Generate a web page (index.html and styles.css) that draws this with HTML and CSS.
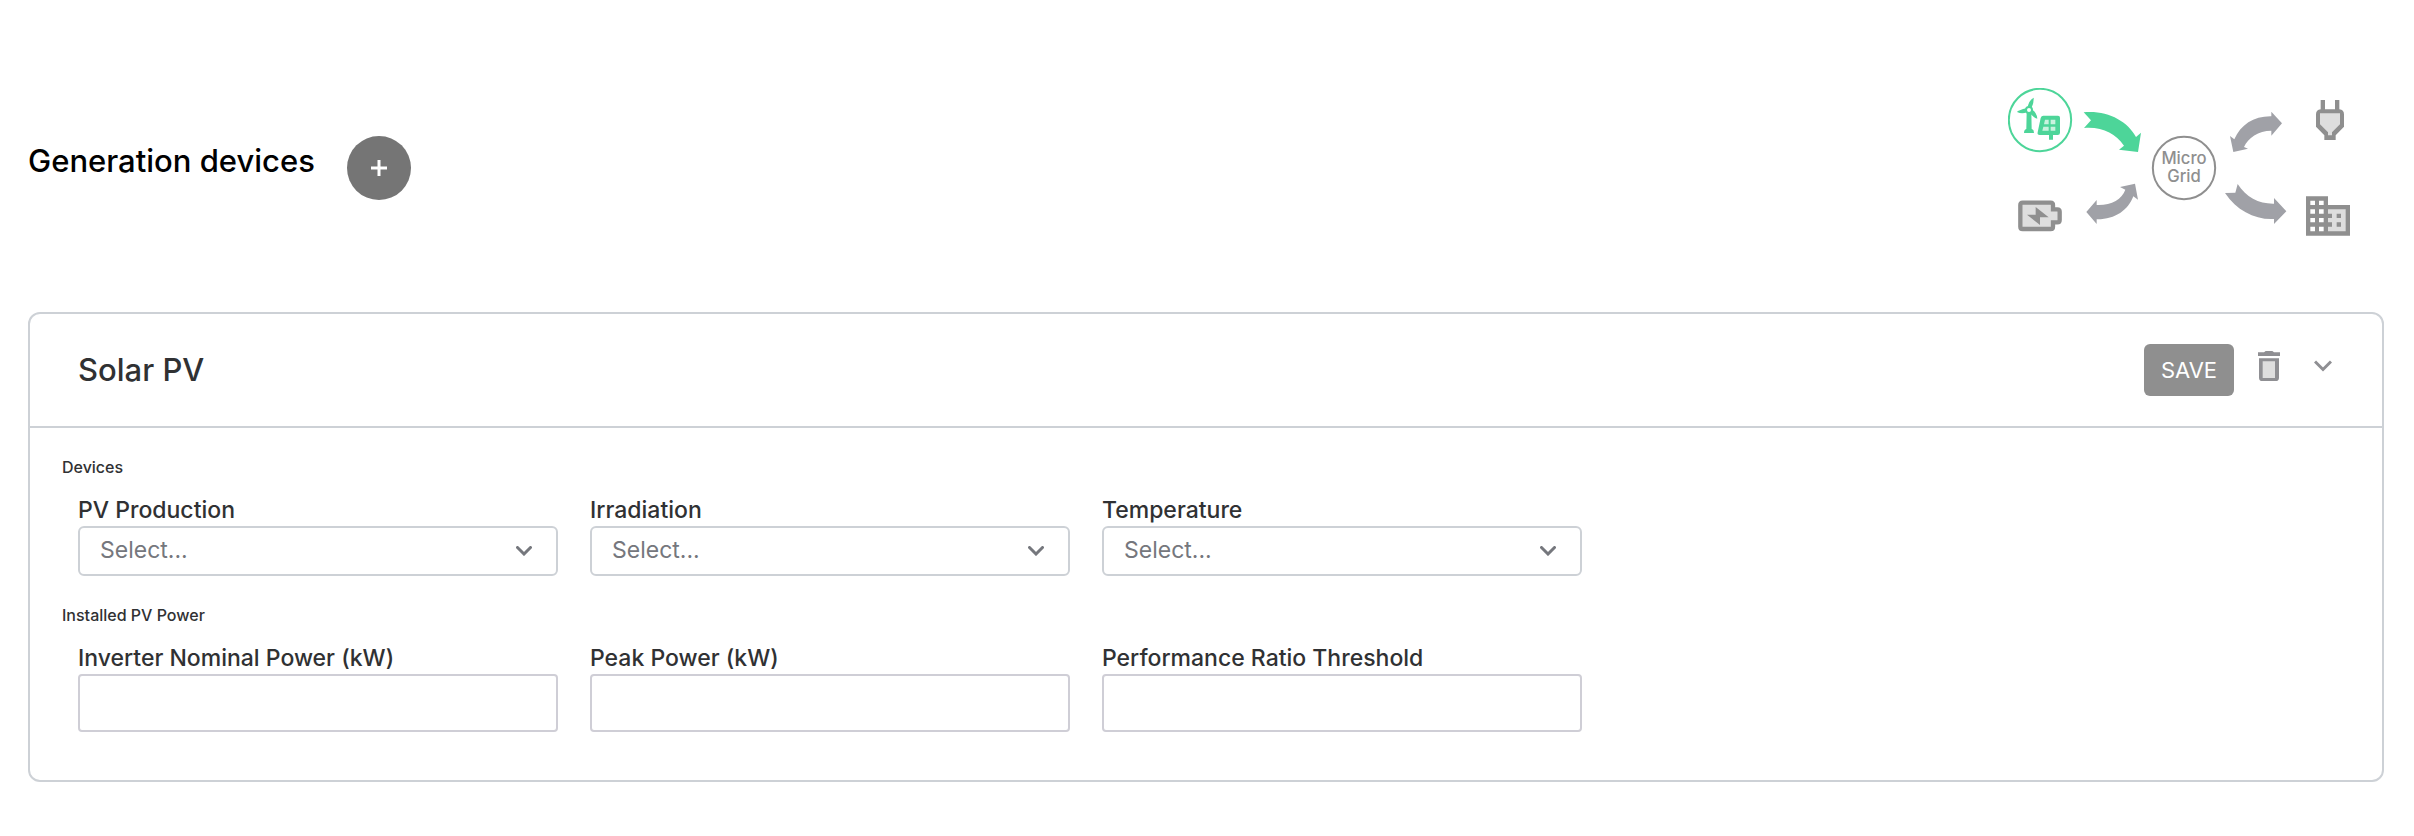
FILE: index.html
```html
<!DOCTYPE html>
<html lang="en">
<head>
<meta charset="utf-8">
<meta name="viewport" content="width=device-width, initial-scale=1">
<title>Generation devices</title>
<link rel="stylesheet" href="styles.css">
</head>
<body>
<main class="page">
  <header class="page-header">
    <h1 class="page-title">Generation devices</h1>
    <button class="add-button" type="button" aria-label="Add device">
      <svg class="add-icon" viewBox="0 0 16 16" aria-hidden="true"><path d="M8 0v16M0 8h16" stroke="currentColor" stroke-width="3"/></svg>
    </button>
    <svg class="grid-diagram" viewBox="0 0 1056 480" role="img" aria-label="Micro grid energy flow">
      <g transform="translate(-54 -54)">
        <g class="active">
          <circle class="ring" cx="150" cy="150" r="93.5"/>
          <path class="fill" d="M110 127h14l1 50q7 2 7 12h-30q0-10 7-12z"/>
          <path class="fill" d="M113 114q2-22 18-31q1 16-8 34zM111 127q-16 6-30-1q2-5 31-12zM124 117q17 10 18 29q-10-2-23-17z"/>
          <circle class="hub" cx="117" cy="120" r="9"/>
          <path class="fill" d="M160 137h44q6 0 6 6v45q0 7-7 7h-14v14h-12v-14h-28q-8 0-6-8l9-43q2-7 8-7z"/>
          <path class="pane" d="M165 149h11v14h-14zM182 149h14v14h-14zM160 170h16v12h-19zM182 170h14v12h-14z"/>
          <path class="fill" d="M281 127C350 120 412 152 438 201L453 188L444 246L387 239L402 227C375 190 338 170 282 174L303 151Z"/>
        </g>
        <path class="arrow" d="M390 351L435 341L444 389L430 379C414 421 375 449 320 448V462L289 426L320 390V405C362 407 396 388 406 359Z"/>
        <g class="icon">
          <path class="tint" d="M91 399h98v20h20v36h-20v22H91z"/>
          <path class="outline" d="M98 398h84q7 0 7 7v13h13q7 0 7 7v25q0 7-7 7h-13v13q0 7-7 7H98q-7 0-7-7v-65q0-7 7-7z"/>
          <path class="solid" d="M137 411L176 442H150V465L111 434H137Z"/>
        </g>
        <circle class="ring muted" cx="582" cy="294" r="93.5"/>
        <text class="hub-text" x="582" y="282">Micro</text>
        <text class="hub-text" x="582" y="336">Grid</text>
      </g>
      <g transform="translate(516 -54)">
        <path class="arrow" d="M150 198L163 208C182 164 222 138 274 139V125L306 160L274 197V182C235 182 204 204 192 231L204 236L160 246Z"/>
        <path class="arrow" d="M135 369L166 368L173 342C198 382 238 402 282 401V384L319 424L282 462V447C225 450 171 422 135 369Z"/>
        <g class="icon">
          <path class="tint" d="M415 124h70v41l-28 28v8h-14v-8l-28-28z"/>
          <path class="solid" d="M422 90h13v28h30V90h13v28q14 2 14 15v37l-25 26v14h-34v-14l-25-26v-37q0-13 14-15zM420 130v33l24 24v9h12v-9l24-24v-33z" fill-rule="evenodd"/>
          <path class="tint" d="M440 412h63v77h-63z"/>
          <path class="solid" fill-rule="evenodd" d="M378 379h66v26h66v92H378zM444 418v13h12v13h-12v13h12v13h-12v14h53v-66zM470 431h13v13h-13zM470 457h13v13h-13z"/>
          <path class="window" d="M391 392h14v13h-14zM417 392h14v13h-14zM391 418h14v13h-14zM417 418h14v13h-14zM391 444h14v13h-14zM417 444h14v13h-14zM391 470h14v14h-14zM417 470h14v14h-14z"/>
        </g>
      </g>
    </svg>
  </header>

  <form class="card">
    <div class="card-header">
      <h2 class="card-title">Solar PV</h2>
      <button class="save-button" type="button">SAVE</button>
      <button class="icon-button" type="button" aria-label="Delete">
        <svg class="trash-icon" viewBox="0 0 66 90" aria-hidden="true">
          <path fill="#dedede" d="M9 26h48v58H9z"/>
          <path fill="#8f8f93" fill-rule="evenodd" d="M18 4l5-4h20l5 4h18v11H0V4zM3 22h60v58q0 10-10 10H13q-10 0-10-10zM14 31v50h37V31z"/>
        </svg>
      </button>
      <button class="icon-button" type="button" aria-label="Collapse">
        <svg class="collapse-icon" viewBox="0 0 18 12" aria-hidden="true"><path d="M1 1.500L9 9.500L17 1.500" fill="none" stroke="currentColor" stroke-width="3"/></svg>
      </button>
    </div>
    <div class="card-body">
      <section class="group">
        <h3 class="group-title">Devices</h3>
        <div class="fields">
          <div class="field">
            <label class="label" for="production">PV Production</label>
            <div class="select-box">
              <select class="select" id="production"><option>Select...</option></select>
              <svg class="chevron" viewBox="0 0 16 10" aria-hidden="true"><path d="M1.500 1.500L8 8L14.500 1.500"/></svg>
            </div>
          </div>
          <div class="field">
            <label class="label" for="irradiation">Irradiation</label>
            <div class="select-box">
              <select class="select" id="irradiation"><option>Select...</option></select>
              <svg class="chevron" viewBox="0 0 16 10" aria-hidden="true"><path d="M1.500 1.500L8 8L14.500 1.500"/></svg>
            </div>
          </div>
          <div class="field">
            <label class="label" for="temperature">Temperature</label>
            <div class="select-box">
              <select class="select" id="temperature"><option>Select...</option></select>
              <svg class="chevron" viewBox="0 0 16 10" aria-hidden="true"><path d="M1.500 1.500L8 8L14.500 1.500"/></svg>
            </div>
          </div>
        </div>
      </section>
      <section class="group">
        <h3 class="group-title">Installed PV Power</h3>
        <div class="fields">
          <div class="field">
            <label class="label" for="nominal">Inverter Nominal Power (kW)</label>
            <input class="input" id="nominal" type="text">
          </div>
          <div class="field">
            <label class="label" for="peak">Peak Power (kW)</label>
            <input class="input" id="peak" type="text">
          </div>
          <div class="field">
            <label class="label" for="threshold">Performance Ratio Threshold</label>
            <input class="input" id="threshold" type="text">
          </div>
        </div>
      </section>
    </div>
  </form>
</main>
</body>
</html>
```

FILE: styles.css
```css
* {
  box-sizing: border-box;
}

body {
  margin: 0;
  background: #fff;
  color: #303133;
  font-family: Inter, "Liberation Sans", sans-serif;
}

h1, h2, h3 {
  margin: 0;
  font-weight: 500;
}

button, select, input {
  font-family: inherit;
  margin: 0;
}

button {
  cursor: pointer;
}

.page {
  padding: 88px 30px 54px 28px;
}

.page-header {
  display: flex;
  align-items: center;
  gap: 32px;
  margin-bottom: 64px;
  padding-right: 24px;
}

.page-title {
  padding-bottom: 14px;
  color: #000;
  font-size: 31px;
  line-height: 40px;
}

.add-button {
  display: flex;
  align-items: center;
  justify-content: center;
  width: 64px;
  height: 64px;
  padding: 0;
  border: 0;
  border-radius: 50%;
  background: #757575;
  color: #fff;
}

.add-icon {
  width: 16px;
}

.grid-diagram {
  width: 352px;
  margin-left: auto;
}

.ring {
  fill: none;
  stroke: #4dd599;
  stroke-width: 6;
}

.muted {
  stroke: #8f8f8f;
}

.fill {
  fill: #4dd599;
}

.hub {
  fill: #fff;
  stroke: #4dd599;
  stroke-width: 6;
}

.pane {
  fill: #c9f3df;
}

.arrow {
  fill: #a0a1a7;
}

.solid {
  fill: #8f8f8f;
}

.tint {
  fill: #dedede;
}

.window {
  fill: #fff;
}

.outline {
  fill: none;
  stroke: #8f8f8f;
  stroke-width: 13;
}

.hub-text {
  fill: #8f8f8f;
  font-size: 50px;
  font-weight: 500;
  text-anchor: middle;
}

.card {
  border: 2px solid #cdd1d6;
  border-radius: 12px;
}

.card-header {
  display: flex;
  align-items: center;
  gap: 24px;
  padding: 30px 50px 30px 48px;
  border-bottom: 2px solid #cdd1d6;
}

.card-title {
  flex: 1;
  font-size: 31px;
  line-height: 40px;
}

.save-button {
  height: 52px;
  width: 90px;
  padding: 0;
  border: 0;
  border-radius: 6px;
  background: #8f8f8f;
  color: #fff;
  font-size: 22px;
}

.icon-button {
  display: flex;
  align-items: center;
  padding: 0 0 8px;
  border: 0;
  background: none;
  color: #8f8f93;
}

.icon-button + .icon-button {
  margin-left: 10px;
}

.trash-icon {
  width: 22px;
}

.collapse-icon {
  width: 18px;
}

.card-body {
  display: grid;
  gap: 28px;
  padding: 28px 32px 48px;
}

.group-title {
  margin-bottom: 18px;
  font-size: 16px;
  line-height: 22px;
}

.fields {
  display: grid;
  grid-template-columns: repeat(3, minmax(0, 480px));
  gap: 32px;
  padding: 0 16px;
}

.field {
  display: grid;
  gap: 2px;
}

.label {
  font-size: 23px;
  font-weight: 500;
  line-height: 28px;
}

.select-box {
  position: relative;
}

.select {
  display: block;
  width: 100%;
  height: 50px;
  padding: 0 48px 2px 20px;
  border: 2px solid #cdd1d6;
  border-radius: 6px;
  appearance: none;
  background: #fff;
  color: #75777d;
  font-size: 23px;
}

.chevron {
  position: absolute;
  top: 20px;
  right: 26px;
  width: 16px;
  pointer-events: none;
  fill: none;
  stroke: #75777d;
  stroke-width: 3;
  stroke-linecap: round;
}

.input {
  width: 100%;
  height: 58px;
  padding: 0 20px;
  border: 2px solid #cfced6;
  border-radius: 4px;
  background: #fff;
  font-size: 23px;
}
```
